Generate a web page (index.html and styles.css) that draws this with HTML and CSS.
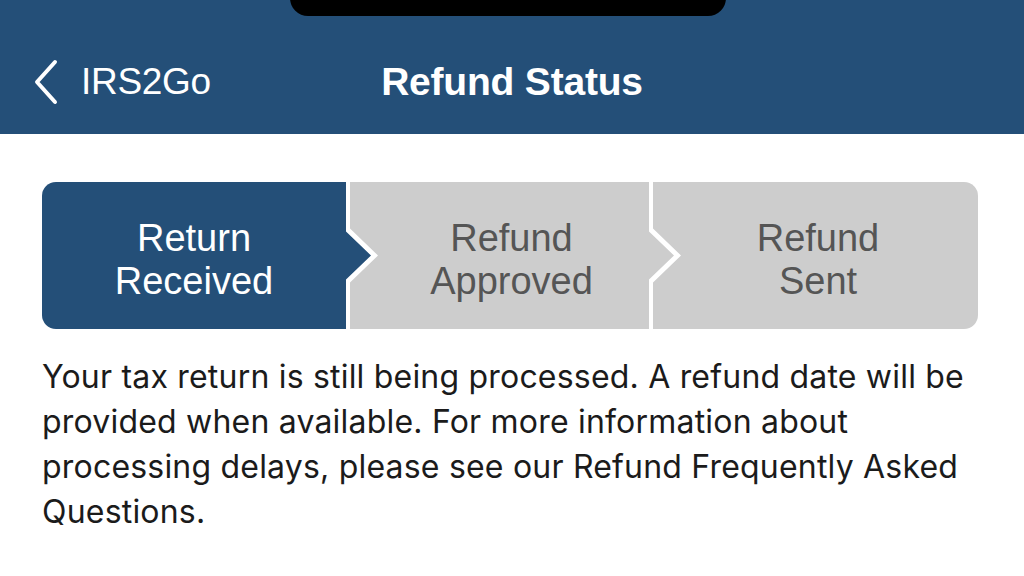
FILE: index.html
```html
<!DOCTYPE html>
<html>
<head>
<meta charset="utf-8">
<link rel="stylesheet" href="styles.css">
</head>
<body>
<header class="navbar">
  <div class="notch"></div>
  <div class="nav-row">
    <a class="back">
      <svg class="chev" width="26" height="46" viewBox="0 0 26 46"><path d="M22 3 L4 23 L22 43" fill="none" stroke="#fff" stroke-width="4" stroke-linecap="round" stroke-linejoin="round"/></svg>
      <span>IRS2Go</span>
    </a>
    <h1 class="title">Refund Status</h1>
    <div></div>
  </div>
</header>
<main class="content">
  <div class="stepper">
    <div class="step step-first active"><span>Return<br>Received</span></div>
    <div class="step step-mid"><span>Refund<br>Approved</span></div>
    <div class="step step-last"><span>Refund<br>Sent</span></div>
  </div>
  <p class="message">Your tax return is still being processed. A refund date will be provided when available. For more information about processing delays, please see our Refund Frequently Asked Questions.</p>
</main>
</body>
</html>
```
FILE: styles.css
```css
html, body {
  margin: 0;
  padding: 0;
  background: #fff;
}
body {
  width: 1024px;
  height: 576px;
  overflow: hidden;
  font-family: "Liberation Sans", Arial, sans-serif;
}
.navbar {
  position: relative;
  height: 134px;
  background: #244f78;
  color: #fff;
}
.notch {
  position: absolute;
  left: 290px;
  top: -20px;
  width: 436px;
  height: 36px;
  background: #000;
  border-radius: 22px;
}
.nav-row {
  display: grid;
  grid-template-columns: 1fr auto 1fr;
  align-items: center;
  height: 134px;
  padding-top: 30px;
  box-sizing: border-box;
}
.back {
  display: flex;
  align-items: center;
  gap: 22px;
  padding-left: 33px;
  font-size: 37px;
  letter-spacing: -0.3px;
}
.chev {
  display: block;
}
.title {
  margin: 0;
  font-size: 39px;
  font-weight: bold;
  letter-spacing: -0.2px;
}
.content {
  padding: 48px 46px 0 42px;
}
.stepper {
  display: flex;
  height: 147px;
  border-radius: 14px;
  overflow: hidden;
}
.step {
  display: flex;
  align-items: center;
  justify-content: center;
  text-align: center;
  background: #cdcdcd;
  color: #555;
  font-size: 38px;
  line-height: 43px;
  padding-top: 8px;
  box-sizing: border-box;
}
.step.active {
  background: #244f78;
  color: #fff;
}
.step-first {
  width: 329px;
  padding-right: 25px;
  clip-path: polygon(0 0, calc(100% - 25px) 0, calc(100% - 25px) calc(50% - 24px), 100% 50%, calc(100% - 25px) calc(50% + 24px), calc(100% - 25px) 100%, 0 100%);
}
.step-mid {
  width: 324px;
  margin-left: -21px;
  padding-left: 24px;
  padding-right: 25px;
  clip-path: polygon(0 0, calc(100% - 25px) 0, calc(100% - 25px) calc(50% - 24px), 100% 50%, calc(100% - 25px) calc(50% + 24px), calc(100% - 25px) 100%, 0 100%, 0 calc(50% + 27px), 28px 50%, 0 calc(50% - 27px));
}
.step-last {
  flex: 1;
  margin-left: -21px;
  padding-left: 5px;
  clip-path: polygon(0 0, 100% 0, 100% 100%, 0 100%, 0 calc(50% + 27px), 28px 50%, 0 calc(50% - 27px));
}
.message {
  margin: 25px 0 0 0;
  font-family: Inter, "Liberation Sans", sans-serif;
  font-size: 32px;
  letter-spacing: 0.2px;
  line-height: 45px;
  color: #1b1b1b;
}
```
